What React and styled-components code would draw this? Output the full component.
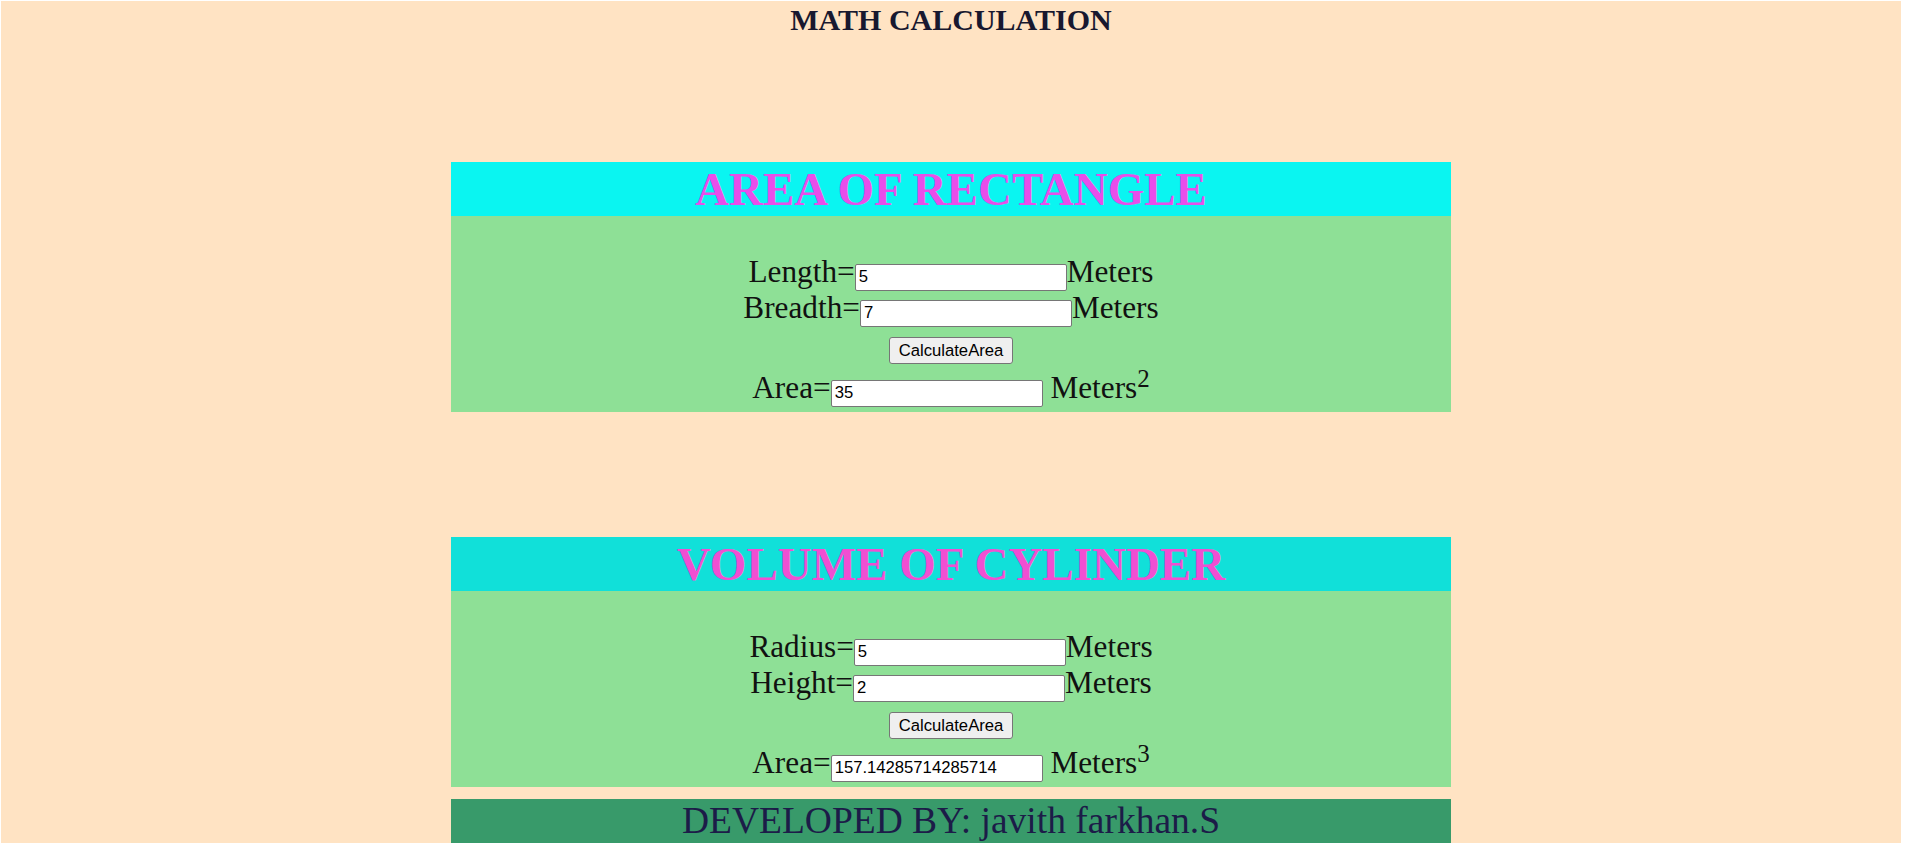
import React from "react";
import styled, { createGlobalStyle } from "styled-components";

const Global = createGlobalStyle`
  html { background: #ffffff; }
  body { margin: 0; }
`;

const Page = styled.div`
  margin: 1px 6px 0 1px;
  padding-top: 2px;
  min-height: 842px;
  background: #ffe3c3;
  font-family: "Liberation Serif", "Times New Roman", serif;
`;

const MainTitle = styled.h2`
  margin: 0;
  text-align: center;
  font-size: 30px;
  line-height: 33px;
  font-weight: bold;
  color: #18182f;
`;

const Card = styled.section`
  width: 1000px;
  margin: ${(p) => p.$top}px auto 0;
`;

const CardHeader = styled.h1`
  margin: 0;
  height: 54px;
  line-height: 54px;
  text-align: center;
  font-size: 47px;
  font-weight: bold;
  background: ${(p) => p.$bg};
  color: ${(p) => p.$color};
`;

const CardBody = styled.div`
  background: #8ee096;
  padding: 39px 0 5px;
`;

const Row = styled.div`
  display: flex;
  justify-content: center;
  align-items: baseline;
  height: 36px;
  margin-top: ${(p) => p.$mt || 0}px;
`;

const Label = styled.span`
  font-size: 31.25px;
  line-height: 33px;
  color: #111111;
  white-space: pre;

  sup {
    font-size: 0.8em;
    line-height: 0;
  }
`;

const Field = styled.input`
  box-sizing: border-box;
  width: 212px;
  height: 27px;
  margin: 0;
  padding: 0 3px;
  border: 1px solid #767676;
  border-radius: 2px;
  background: #ffffff;
  font-family: "Liberation Sans", Arial, sans-serif;
  font-size: 16.67px;
  color: #000000;
`;

const ButtonRow = styled.div`
  display: flex;
  justify-content: center;
  margin-top: 10px;
`;

const Button = styled.button`
  height: 27px;
  margin: 0;
  padding: 0 9px;
  border: 1px solid #767676;
  border-radius: 3px;
  background: #efefef;
  font-family: "Liberation Sans", Arial, sans-serif;
  font-size: 16.67px;
  color: #000000;
`;

const Footer = styled.footer`
  width: 1000px;
  margin: 12px auto 0;
  height: 60px;
  background: #389a6a;
  text-align: center;
  font-size: 37.5px;
  line-height: 44px;
  color: #1c1c48;
`;

function Calculator({ top, title, headerBg, titleColor, first, second, result, power }) {
  return (
    <Card $top={top}>
      <CardHeader $bg={headerBg} $color={titleColor}>{title}</CardHeader>
      <CardBody>
        <Row>
          <Label>{first.label}=</Label>
          <Field defaultValue={first.value} />
          <Label>Meters</Label>
        </Row>
        <Row>
          <Label>{second.label}=</Label>
          <Field defaultValue={second.value} />
          <Label>Meters</Label>
        </Row>
        <ButtonRow>
          <Button>CalculateArea</Button>
        </ButtonRow>
        <Row $mt={7}>
          <Label>Area=</Label>
          <Field defaultValue={result} />
          <Label>
            {" Meters"}
            <sup>{power}</sup>
          </Label>
        </Row>
      </CardBody>
    </Card>
  );
}

export default function App() {
  return (
    <>
      <Global />
      <Page>
        <MainTitle>MATH CALCULATION</MainTitle>
        <Calculator
          top={126}
          title="AREA OF RECTANGLE"
          headerBg="#0af5f1"
          titleColor="#e84eea"
          first={{ label: "Length", value: "5" }}
          second={{ label: "Breadth", value: "7" }}
          result="35"
          power="2"
        />
        <Calculator
          top={125}
          title="VOLUME OF CYLINDER"
          headerBg="#11e0d9"
          titleColor="#f04fd2"
          first={{ label: "Radius", value: "5" }}
          second={{ label: "Height", value: "2" }}
          result="157.14285714285714"
          power="3"
        />
        <Footer>DEVELOPED BY: javith farkhan.S</Footer>
      </Page>
    </>
  );
}
